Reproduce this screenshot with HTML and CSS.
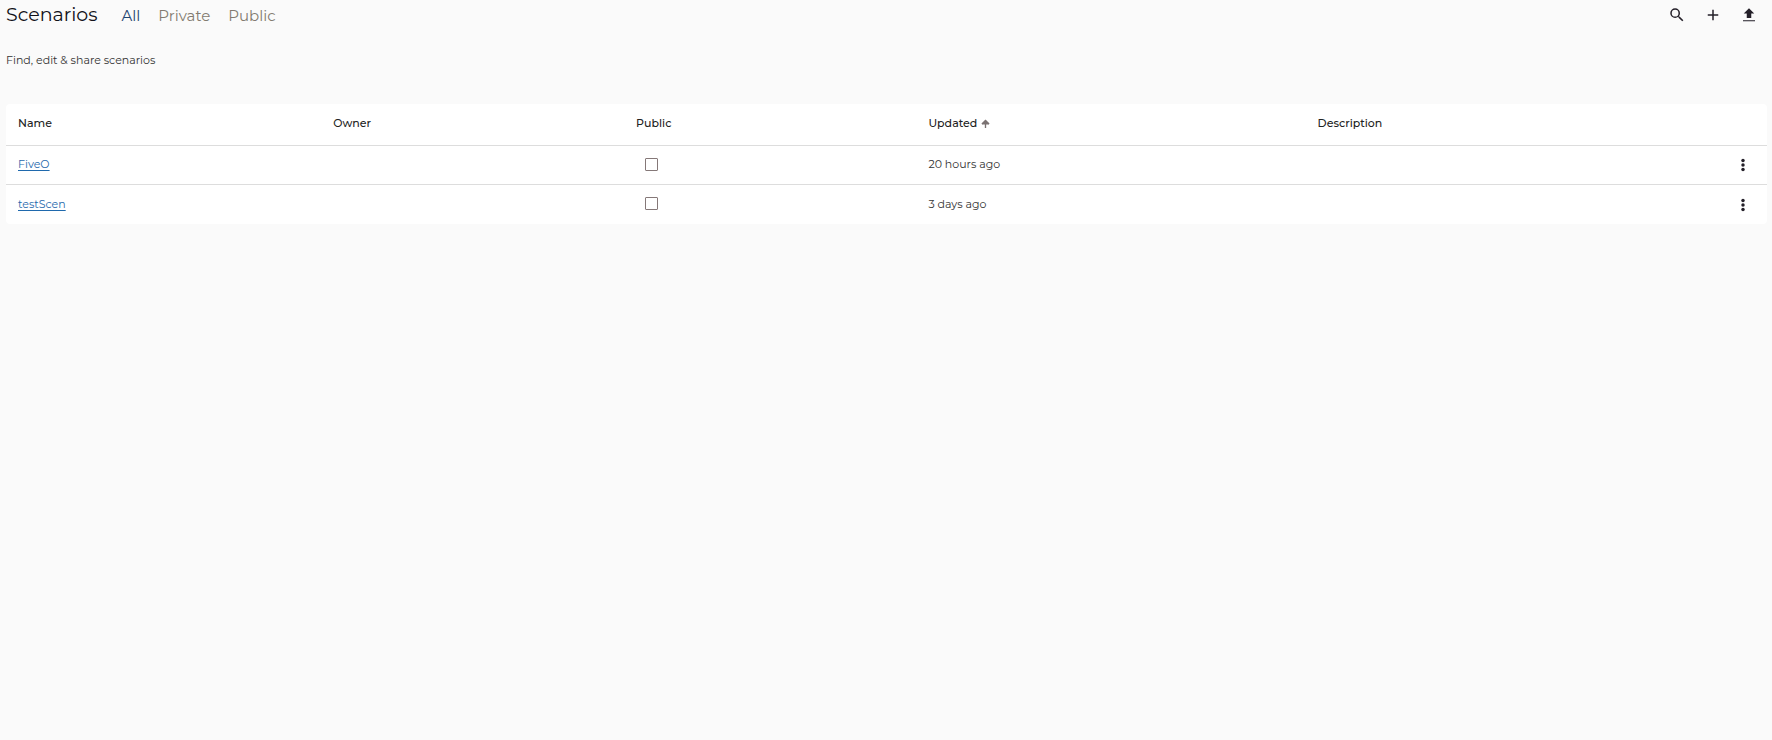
FILE: index.html
```html
<!DOCTYPE html>
<html lang="en">
<head>
    <meta charset="utf-8">
    <title>Scenarios</title>
    <link rel="stylesheet" href="styles.css">
</head>
<body>
    <header class="page-header">
        <h1>Scenarios</h1>
        <nav class="tabs">
            <a href="#all" class="active">All</a>
            <a href="#private">Private</a>
            <a href="#public">Public</a>
        </nav>
        <div class="actions">
            <button type="button" class="icon-button" aria-label="Search">
                <svg viewBox="0 0 24 24"><path d="M15.5 14h-.79l-.28-.27A6.47 6.47 0 0 0 16 9.5 6.5 6.5 0 1 0 9.5 16c1.61 0 3.09-.59 4.23-1.57l.27.28v.79l5 4.99L20.49 19l-4.99-5zm-6 0A4.5 4.5 0 1 1 14 9.5 4.5 4.5 0 0 1 9.5 14z"/></svg>
            </button>
            <button type="button" class="icon-button" aria-label="Add">
                <svg viewBox="0 0 24 24"><path d="M19 13h-6v6h-2v-6H5v-2h6V5h2v6h6v2z"/></svg>
            </button>
            <button type="button" class="icon-button" aria-label="Upload">
                <svg viewBox="0 0 24 24"><path d="M9 16h6v-6h4l-7-7-7 7h4v6zm-5 3h16v1.400H4z"/></svg>
            </button>
        </div>
    </header>

    <p class="subtitle">Find, edit &amp; share scenarios</p>

    <table class="scenario-table">
        <colgroup>
            <col class="col-name">
            <col class="col-owner">
            <col class="col-public">
            <col class="col-updated">
            <col>
            <col class="col-menu">
        </colgroup>
        <thead>
            <tr>
                <th>Name</th>
                <th>Owner</th>
                <th>Public</th>
                <th aria-sort="ascending">Updated<svg class="sort-icon" viewBox="0 0 10 10"><path d="M5 1v9M1 5.500l4-4 4 4" fill="none" stroke="currentColor" stroke-width="1.500"/><path d="M5 1L1 6h8z"/></svg></th>
                <th>Description</th>
                <th></th>
            </tr>
        </thead>
        <tbody>
            <tr>
                <td><a href="#fiveo">FiveO</a></td>
                <td></td>
                <td><input type="checkbox" aria-label="FiveO is public"></td>
                <td>20 hours ago</td>
                <td></td>
                <td class="menu-cell">
                    <button type="button" class="menu-button" aria-label="FiveO menu">
                        <svg viewBox="0 0 24 24"><circle cx="12" cy="6" r="2.300"/><circle cx="12" cy="12" r="2.300"/><circle cx="12" cy="18" r="2.300"/></svg>
                    </button>
                </td>
            </tr>
            <tr>
                <td><a href="#testscen">testScen</a></td>
                <td></td>
                <td><input type="checkbox" aria-label="testScen is public"></td>
                <td>3 days ago</td>
                <td></td>
                <td class="menu-cell">
                    <button type="button" class="menu-button" aria-label="testScen menu">
                        <svg viewBox="0 0 24 24"><circle cx="12" cy="6" r="2.300"/><circle cx="12" cy="12" r="2.300"/><circle cx="12" cy="18" r="2.300"/></svg>
                    </button>
                </td>
            </tr>
        </tbody>
    </table>
</body>
</html>
```
FILE: styles.css
```css
body {
    margin: 0;
    padding: 0 5px 0 6px;
    background-color: #fafafa;
    color: #333;
    font-family: Montserrat, Inter, sans-serif;
    font-size: 11px;
    line-height: 16px;
}

.page-header {
    display: flex;
    align-items: center;
    height: 29px;
}

h1 {
    margin: 0;
    color: #111118;
    font-size: 19px;
    font-weight: 400;
    line-height: 28px;
}

.tabs {
    display: flex;
    gap: 18px;
    margin-left: 24px;
    padding-top: 2px;
    font-size: 15px;
    font-weight: 400;
    line-height: 24px;
}

.tabs a {
    color: #827a70;
    text-decoration: none;
}

.tabs a.active {
    color: #1f4672;
}

.actions {
    display: flex;
    margin-left: auto;
}

.icon-button,
.menu-button {
    display: flex;
    align-items: center;
    justify-content: center;
    padding: 0;
    border: none;
    background: none;
    color: #231f28;
    cursor: pointer;
}

.icon-button {
    width: 36px;
    height: 28px;
}

.icon-button svg,
.menu-button svg {
    width: 18px;
    height: 18px;
    fill: currentColor;
}

.subtitle {
    margin: 23px 0 36px;
}

.scenario-table {
    width: 100%;
    border-collapse: separate;
    border-spacing: 0;
    border-radius: 4px;
    background-color: #fff;
    table-layout: fixed;
}

.col-name {
    width: 17.9%;
}

.col-owner {
    width: 17.2%;
}

.col-public {
    width: 16.6%;
}

.col-updated {
    width: 22.1%;
}

.col-menu {
    width: 48px;
}

th,
td {
    height: 36px;
    padding: 0 12px 2px;
    border-bottom: 1px solid #ddd;
    text-align: left;
}

th {
    height: 37px;
    padding-bottom: 4px;
    color: #222;
    font-weight: 500;
}

tbody tr:last-child td {
    height: 37px;
    border-bottom: none;
}

td a {
    color: #1f69ad;
    text-underline-offset: 2px;
}

.sort-icon {
    width: 9px;
    height: 9px;
    margin-left: 4px;
    color: #7b7272;
    fill: currentColor;
    vertical-align: -1px;
}

input[type="checkbox"] {
    display: block;
    appearance: none;
    width: 13px;
    height: 13px;
    margin: 0 0 0 9px;
    border: 1px solid #857878;
    border-radius: 1px;
    background-color: #fff;
}

input[type="checkbox"]:checked {
    background-color: #857878;
}

td.menu-cell {
    padding: 0;
}

.menu-button {
    width: 48px;
    height: 28px;
}
```
